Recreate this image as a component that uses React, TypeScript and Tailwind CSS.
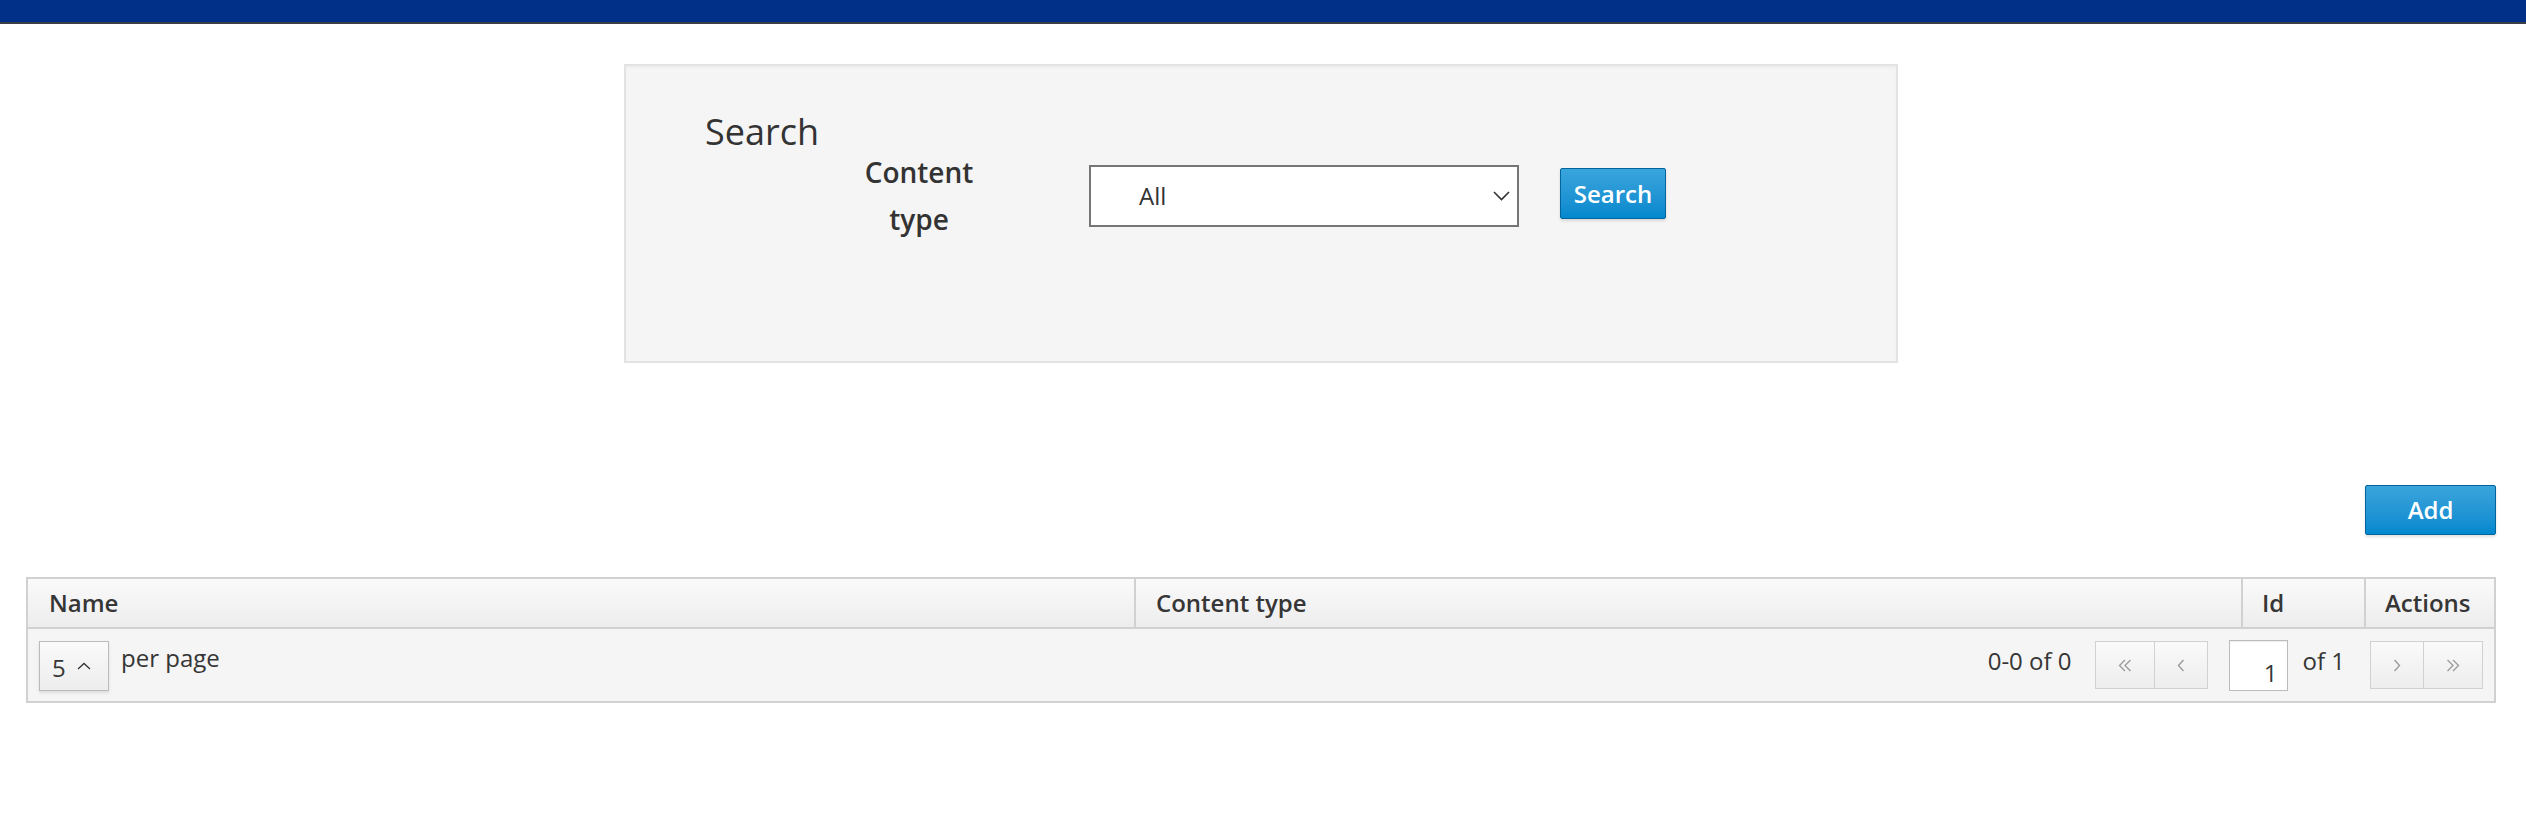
import React from "react";

const AngleLeft = () => (
  <svg width="8" height="13" viewBox="0 0 8 13" fill="none">
    <polyline points="6.5,1 1.5,6.5 6.5,12" stroke="currentColor" strokeWidth="1.4" />
  </svg>
);

const AngleRight = () => (
  <svg width="8" height="13" viewBox="0 0 8 13" fill="none">
    <polyline points="1.5,1 6.5,6.5 1.5,12" stroke="currentColor" strokeWidth="1.4" />
  </svg>
);

const DoubleLeft = () => (
  <svg width="14" height="13" viewBox="0 0 14 13" fill="none">
    <polyline points="7,1 1.5,6.5 7,12" stroke="currentColor" strokeWidth="1.4" />
    <polyline points="12.5,1 7,6.5 12.5,12" stroke="currentColor" strokeWidth="1.4" />
  </svg>
);

const DoubleRight = () => (
  <svg width="14" height="13" viewBox="0 0 14 13" fill="none">
    <polyline points="1.5,1 7,6.5 1.5,12" stroke="currentColor" strokeWidth="1.4" />
    <polyline points="7,1 12.5,6.5 7,12" stroke="currentColor" strokeWidth="1.4" />
  </svg>
);

const PagerButton: React.FC<{ w: string; children: React.ReactNode; divider?: boolean }> = ({
  w,
  children,
  divider,
}) => (
  <div
    className={`${w} ${
      divider ? "border-l border-[#d1d1d1]" : ""
    } h-full flex items-center justify-center text-[#9c9c9c] bg-gradient-to-b from-[#fafafa] to-[#ededed]`}
  >
    {children}
  </div>
);

const PrimaryButton: React.FC<{ className: string; children: React.ReactNode }> = ({
  className,
  children,
}) => (
  <button
    className={`${className} flex items-center justify-center rounded-[2px] border border-[#00659c] bg-gradient-to-b from-[#39a5dc] to-[#0088ce] text-white text-[24px] font-semibold shadow-[0_2px_3px_rgba(3,3,3,0.12)]`}
  >
    {children}
  </button>
);

export default function App() {
  return (
    <div className="font-['Open_Sans',sans-serif] text-[#363636] bg-white min-h-[822px]">
      <div className="h-[24px] bg-[#003087] border-b-2 border-[#393f44]" />

      {/* search panel */}
      <div className="mt-[40px] ml-[624px] w-[1274px] h-[299px] border-2 border-[#e3e3e3] bg-[#f5f5f5] shadow-[inset_0_2px_2px_rgba(0,0,0,0.03)] pl-[79px] pt-[49px]">
        <h1 className="text-[36px] leading-[34px] text-[#333]">Search</h1>
        <div className="flex items-start">
          <label className="ml-[139px] w-[150px] text-center text-[28px] leading-[47px] font-semibold text-[#333]">
            Content type
          </label>
          <div className="ml-[95px] mt-[16px] w-[430px] h-[62px] border-2 border-[#767676] bg-white flex items-center pl-[48px] pr-[7px]">
            <span className="text-[24px] text-[#333] flex-1">All</span>
            <svg width="17" height="10" viewBox="0 0 17 10" fill="none">
              <polyline points="1,1 8.5,8.5 16,1" stroke="#333" strokeWidth="1.6" />
            </svg>
          </div>
          <PrimaryButton className="ml-[41px] mt-[19px] w-[106px] h-[51px]">Search</PrimaryButton>
        </div>
      </div>

      <div className="pl-[26px] pr-[30px]">
        <div className="mt-[122px] flex justify-end">
          <PrimaryButton className="w-[131px] h-[50px]">Add</PrimaryButton>
        </div>

        {/* table */}
        <div className="mt-[42px] border-2 border-[#d1d1d1] bg-[#f5f5f5]">
          <div className="flex h-[50px] border-b-2 border-[#d1d1d1] bg-gradient-to-b from-[#fafafa] to-[#ededed] text-[24px] font-semibold">
            <div className="w-[1106px] pl-[21px] flex items-center">Name</div>
            <div className="w-[1107px] border-l-2 border-[#d1d1d1] pl-[20px] flex items-center">Content type</div>
            <div className="w-[123px] border-l-2 border-[#d1d1d1] pl-[19px] flex items-center">Id</div>
            <div className="flex-1 border-l-2 border-[#d1d1d1] pl-[19px] flex items-center">Actions</div>
          </div>

          <div className="flex items-start h-[72px] px-[11px] pt-[12px] text-[24px]">
            <div className="w-[70px] h-[50px] border border-[#bbb] bg-gradient-to-b from-[#fafafa] to-[#ededed] shadow-[0_2px_3px_rgba(3,3,3,0.1)] flex items-center pl-[12px]">
              <span className="leading-[34px] mt-[3px]">5</span>
              <svg className="ml-[11px]" width="14" height="8" viewBox="0 0 14 8" fill="none">
                <polyline points="1,7 7,1.5 13,7" stroke="#363636" strokeWidth="1.3" />
              </svg>
            </div>
            <span className="ml-[12px] leading-[34px]">per page</span>

            <div className="ml-auto flex items-start">
              <span className="mt-[3px] leading-[34px]">0-0 of 0</span>
              <div className="ml-[23px] flex h-[48px] border border-[#d1d1d1]">
                <PagerButton w="w-[58px]">
                  <DoubleLeft />
                </PagerButton>
                <PagerButton w="w-[53px]" divider>
                  <AngleLeft />
                </PagerButton>
              </div>
              <div className="ml-[21px] -mt-[1px] w-[59px] h-[51px] border border-[#bbb] bg-white shadow-[inset_0_1px_1px_rgba(3,3,3,0.075)] text-right pr-[9px] pt-[15px] leading-[34px]">
                1
              </div>
              <span className="ml-[15px] mt-[3px] leading-[34px]">of 1</span>
              <div className="ml-[25px] flex h-[48px] border border-[#d1d1d1]">
                <PagerButton w="w-[52px]">
                  <AngleRight />
                </PagerButton>
                <PagerButton w="w-[59px]" divider>
                  <DoubleRight />
                </PagerButton>
              </div>
            </div>
          </div>
        </div>
      </div>
    </div>
  );
}
